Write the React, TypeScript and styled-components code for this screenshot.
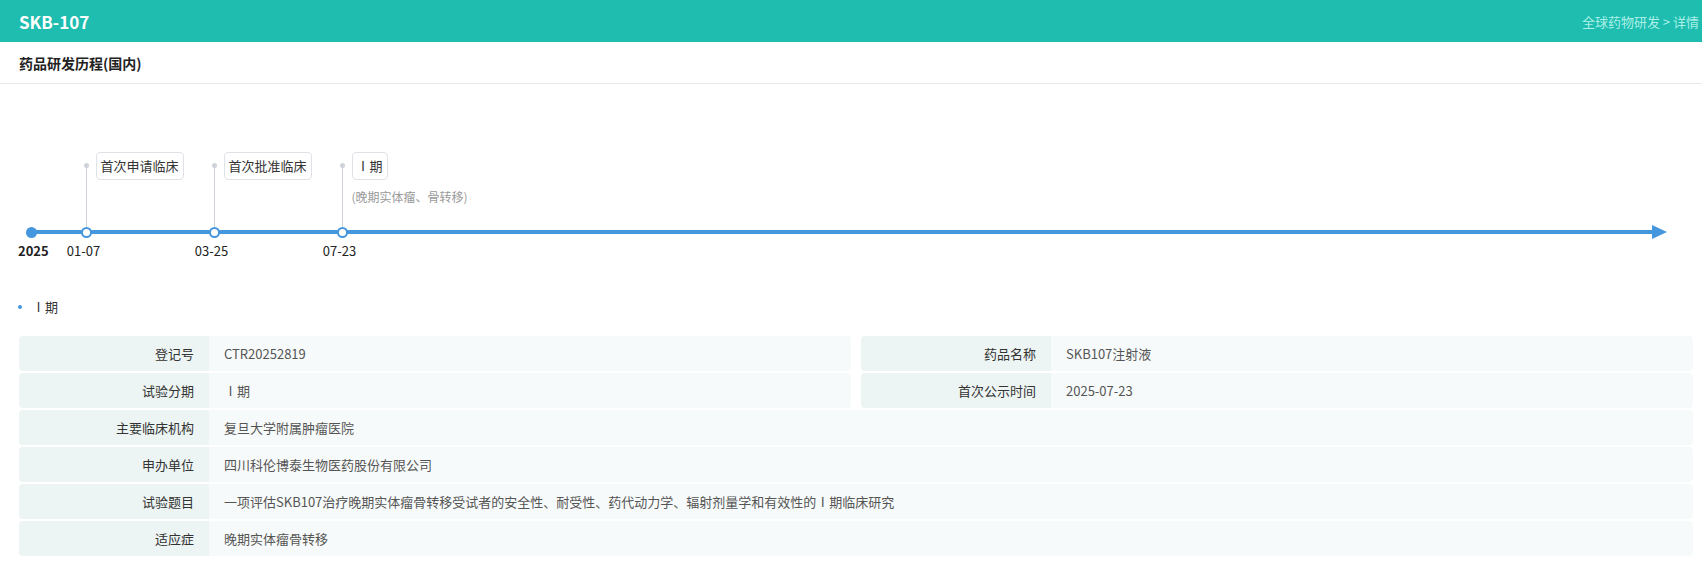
import * as React from 'react';
import styled, { createGlobalStyle } from 'styled-components';

const GlobalStyle = createGlobalStyle`
  html, body {
    margin: 0;
    padding: 0;
    background: #fff;
  }
  body {
    font-family: "Noto Sans CJK SC", "Noto Sans", sans-serif;
    color: #333;
  }
`;

const BLUE = '#4597dd';

interface IMilestone {
  x: number,
  date: string,
  label: string,
  note?: string,
}

interface IField {
  label: string,
  value: string,
  full?: boolean,
}

// x = centre of the node on the axis, in px from the left of the track
const milestones: IMilestone[] = [
  { x: 86, date: '01-07', label: '首次申请临床' },
  { x: 214, date: '03-25', label: '首次批准临床' },
  { x: 342, date: '07-23', label: 'Ⅰ期', note: '(晚期实体瘤、骨转移)' },
];

const fields: IField[] = [
  { label: '登记号', value: 'CTR20252819' },
  { label: '药品名称', value: 'SKB107注射液' },
  { label: '试验分期', value: 'Ⅰ期' },
  { label: '首次公示时间', value: '2025-07-23' },
  { label: '主要临床机构', value: '复旦大学附属肿瘤医院', full: true },
  { label: '申办单位', value: '四川科伦博泰生物医药股份有限公司', full: true },
  { label: '试验题目', value: '一项评估SKB107治疗晚期实体瘤骨转移受试者的安全性、耐受性、药代动力学、辐射剂量学和有效性的Ⅰ期临床研究', full: true },
  { label: '适应症', value: '晚期实体瘤骨转移', full: true },
];

const TopBar = styled.div`
  height: 42px;
  background: #1ebdb0;
  display: flex;
  align-items: center;
  justify-content: space-between;
  padding: 0 3px 0 19px;
`;

const Title = styled.div`
  color: #fff;
  font-size: 17px;
  font-weight: 700;
`;

const Crumbs = styled.div`
  color: #aaf0e6;
  font-size: 13px;
`;

const SectionHeader = styled.div`
  height: 41px;
  display: flex;
  align-items: center;
  padding-left: 19px;
  font-size: 14px;
  font-weight: 700;
  color: #222;
  border-bottom: 1px solid #e8e8e8;
`;

const Track = styled.div`
  position: relative;
  height: 190px;
`;

const Axis = styled.div`
  position: absolute;
  left: 31px;
  right: 35px;
  top: 141px;
  height: 14px;
  display: flex;
  align-items: center;
`;

const AxisLine = styled.div`
  flex: 1;
  height: 4px;
  background: ${BLUE};
`;

const ArrowHead = styled.div`
  width: 0;
  height: 0;
  border-top: 7px solid transparent;
  border-bottom: 7px solid transparent;
  border-left: 15px solid ${BLUE};
  margin-left: -2px;
`;

const Start = styled.div`
  position: absolute;
  left: 25.5px;
  top: 142.5px;
  display: flex;
  flex-direction: column;
`;

const StartDot = styled.div`
  width: 11px;
  height: 11px;
  border-radius: 50%;
  background: ${BLUE};
`;

const YearLabel = styled.div`
  margin: 3.5px 0 0 -7.5px;
  font-size: 13px;
  line-height: 20px;
  font-weight: 700;
  color: #222;
`;

const Node = styled.div`
  position: absolute;
  top: 68px;
  margin-left: -5.5px;
  display: flex;
  flex-direction: column;
`;

const Upper = styled.div`
  display: flex;
  align-items: flex-start;
  height: 74.5px;
`;

const StemColumn = styled.div`
  width: 11px;
  height: 100%;
  box-sizing: border-box;
  padding-top: 10.5px;
  display: flex;
  flex-direction: column;
  align-items: center;
`;

const StemDot = styled.div`
  width: 5px;
  height: 5px;
  border-radius: 50%;
  background: #cfd2d8;
`;

const Stem = styled.div`
  flex: 1;
  width: 1px;
  margin-top: -2.5px;
  background: #cfd2d8;
`;

const Callout = styled.div`
  display: flex;
  flex-direction: column;
  align-items: flex-start;
  gap: 9px;
  margin-left: 4px;
`;

const Tag = styled.div`
  white-space: nowrap;
  border: 1px solid #dfe3e8;
  border-radius: 4px;
  padding: 4px;
  font-size: 13px;
  line-height: 18px;
  color: #333;
  background: #fff;
`;

const Note = styled.div`
  white-space: nowrap;
  font-size: 12px;
  line-height: 16px;
  color: #999;
`;

const Ring = styled.div`
  width: 11px;
  height: 11px;
  box-sizing: border-box;
  border-radius: 50%;
  border: 2.5px solid ${BLUE};
  background: #fff;
`;

const DateLabel = styled.div`
  width: 11px;
  margin: 3.5px 0 0 -2.5px;
  display: flex;
  justify-content: center;
  font-size: 13px;
  line-height: 20px;
  color: #222;
  white-space: nowrap;
`;

const PhaseRow = styled.div`
  display: flex;
  align-items: center;
  gap: 10px;
  margin: 23px 0 0 18px;
  line-height: 20px;
  font-size: 13px;
  color: #333;
`;

const Bullet = styled.span`
  width: 4px;
  height: 4px;
  border-radius: 50%;
  background: ${BLUE};
`;

const InfoGrid = styled.div`
  display: grid;
  grid-template-columns: 1fr 1fr;
  column-gap: 10px;
  row-gap: 2px;
  margin: 19px 9px 0 19px;
`;

const InfoRow = styled.div<{ $full?: boolean }>`
  display: flex;
  height: 35px;
  border-radius: 4px;
  overflow: hidden;
  grid-column: ${(p) => (p.$full ? '1 / span 2' : 'auto')};
`;

const InfoLabel = styled.div`
  flex: 0 0 190px;
  box-sizing: border-box;
  padding-right: 15px;
  display: flex;
  align-items: center;
  justify-content: flex-end;
  background: #edf5f4;
  font-size: 13px;
  color: #333;
`;

const InfoValue = styled.div`
  flex: 1;
  padding-left: 15px;
  display: flex;
  align-items: center;
  background: #f7fafa;
  font-size: 13px;
  color: #555;
  white-space: nowrap;
`;

export default function App() {
  return <>
    <GlobalStyle />
    <TopBar>
      <Title>SKB-107</Title>
      <Crumbs>全球药物研发 &gt; 详情</Crumbs>
    </TopBar>
    <SectionHeader>药品研发历程(国内)</SectionHeader>
    <Track>
      <Axis>
        <AxisLine />
        <ArrowHead />
      </Axis>
      <Start>
        <StartDot />
        <YearLabel>2025</YearLabel>
      </Start>
      {milestones.map((m) => (
        <Node key={m.date} style={{ left: m.x }}>
          <Upper>
            <StemColumn>
              <StemDot />
              <Stem />
            </StemColumn>
            <Callout>
              <Tag>{m.label}</Tag>
              {m.note && <Note>{m.note}</Note>}
            </Callout>
          </Upper>
          <Ring />
          <DateLabel>{m.date}</DateLabel>
        </Node>
      ))}
    </Track>
    <PhaseRow>
      <Bullet />
      <span>Ⅰ期</span>
    </PhaseRow>
    <InfoGrid>
      {fields.map((f) => (
        <InfoRow key={f.label} $full={f.full}>
          <InfoLabel>{f.label}</InfoLabel>
          <InfoValue>{f.value}</InfoValue>
        </InfoRow>
      ))}
    </InfoGrid>
  </>;
}
